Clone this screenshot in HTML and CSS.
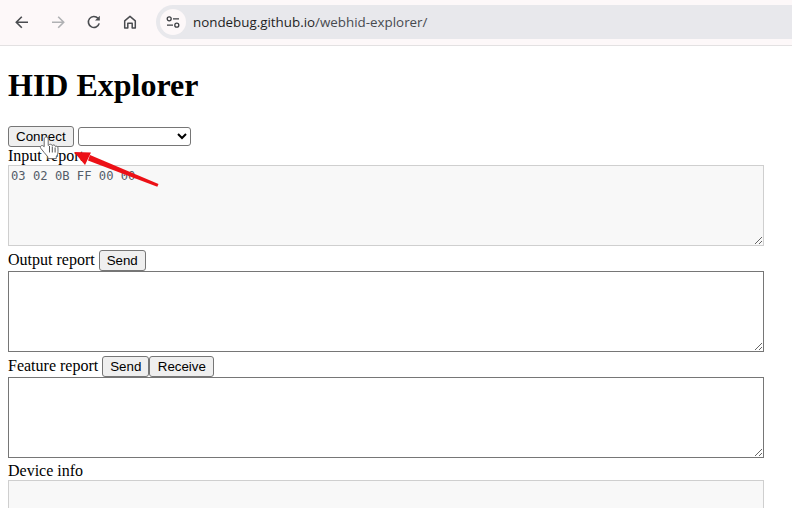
FILE: index.html
```html
<!DOCTYPE html>
<html lang="en">
<head>
<meta charset="utf-8">
<title>HID Explorer</title>
<link rel="stylesheet" href="styles.css">
</head>
<body>
<header class="toolbar">
  <button class="nav" aria-label="Back"><svg width="16" height="16" viewBox="0 0 16 16"><path d="M14 8.300H2.500M7.800 2.800 2.300 8.300l5.500 5.500" fill="none" stroke="#4a4c50" stroke-width="1.600"/></svg></button>
  <button class="nav" aria-label="Forward"><svg width="16" height="16" viewBox="0 0 16 16"><path d="M2 8.300H13.500M8.200 2.800 13.700 8.300l-5.500 5.500" fill="none" stroke="#b0b1b4" stroke-width="1.600"/></svg></button>
  <button class="nav" aria-label="Reload"><svg width="16" height="16" viewBox="0 0 16 16"><path d="M13.200 9.400A5.500 5.500 0 1 1 12 4.300" fill="none" stroke="#4a4c50" stroke-width="1.600"/><path d="M13.800 1.800V6.600H9Z" fill="#4a4c50"/></svg></button>
  <button class="nav" aria-label="Home"><svg width="16" height="16" viewBox="0 0 16 16"><path d="M2.700 14V6.800L8 2.400l5.300 4.400V14H10.200V9.200H5.800V14Z" fill="none" stroke="#4a4c50" stroke-width="1.500" stroke-linejoin="round"/></svg></button>
  <div class="omnibox">
    <span class="site-icon"><svg width="16" height="16" viewBox="0 0 16 16"><circle cx="4.200" cy="4.800" r="2" fill="none" stroke="#3c3e42" stroke-width="1.300"/><path d="M8 4.800h6M2 11.200h6" stroke="#3c3e42" stroke-width="1.300"/><circle cx="11.800" cy="11.200" r="2" fill="none" stroke="#3c3e42" stroke-width="1.300"/></svg></span>
    <span class="url">nondebug.github.io<span class="url-path">/webhid-explorer/</span></span>
  </div>
</header>
<main class="page">
  <h1>HID Explorer</h1>
  <div><button class="ctl">Connect</button> <select class="picker"><option></option></select></div>
  <div>Input report</div>
  <textarea class="report" disabled>03 02 0B FF 00 00</textarea>
  <div>Output report <button class="ctl">Send</button></div>
  <textarea class="report"></textarea>
  <div>Feature report <button class="ctl">Send</button><button class="ctl wide">Receive</button></div>
  <textarea class="report"></textarea>
  <div>Device info</div>
  <textarea class="report" disabled></textarea>
</main>
<svg class="overlay" width="792" height="508" viewBox="0 0 792 508">
  <path d="M158.500 184 157.300 186.800 88 160.500 90 155Z" fill="#ec1016"/>
  <path d="M74 152 91 152.500 85 165Z" fill="#ec1016"/>
  <path d="M44.200 139c0-2.600 4-2.600 4 0v6.500l.6-.3c1-1.500 3-1.100 3.300.3 1.200-1.100 3-.6 3.300.9 1.200-.7 2.600.1 2.600 1.600v3.800c0 2-.8 3.300-1.700 4.800v2H47.800v-1.800c-2.500-3-5-5.800-7-8.500-1.300-1.900.9-3.600 2.400-2.400l1 .8Z" fill="#fff" stroke="#6a6a6a" stroke-width="1"/>
  <path d="M49.500 146v6.500M52.300 146.500v6M55.100 147.500v5" stroke="#555" stroke-width="1"/>
</svg>
</body>
</html>
```
FILE: styles.css
```css
html, body {
  margin: 0;
  height: 508px;
  overflow: hidden;
  background: #fff;
}
body {
  font-family: "Liberation Serif", serif;
  font-size: 16px;
  color: #000;
  position: relative;
}
.toolbar {
  height: 45px;
  background: #fdf8f9;
  border-bottom: 1px solid #e3e1e2;
  display: flex;
  align-items: flex-start;
  padding-left: 4px;
}
.nav {
  width: 36px;
  height: 36px;
  margin-top: 4px;
  padding: 0;
  border: 0;
  background: none;
  display: flex;
  align-items: center;
  justify-content: center;
}
.omnibox {
  margin: 5px 0 0 8px;
  height: 34px;
  flex: 1;
  background: #e8e8ec;
  border-radius: 17px 0 0 17px;
  display: flex;
  align-items: center;
  padding-left: 4px;
}
.site-icon {
  width: 26px;
  height: 26px;
  border-radius: 50%;
  background: #fdf8f9;
  display: flex;
  align-items: center;
  justify-content: center;
}
.url {
  margin-left: 7px;
  font-family: "Open Sans", "Noto Sans", sans-serif;
  font-size: 13.370px;
  color: #1f1f1f;
}
.url-path {
  color: #474a4f;
}
.page {
  padding: 0 8px;
}
h1 {
  font-size: 32px;
  font-weight: bold;
  margin: 21.440px 0;
}
.ctl {
  font-family: "Liberation Sans", sans-serif;
  font-size: 13.333px;
  height: 21px;
  padding: 1px 7px;
  box-sizing: border-box;
  background: #efefef;
  border: 1px solid #767676;
  border-radius: 3px;
  color: #000;
}
.wide {
  width: 65px;
}
.picker {
  width: 113px;
  height: 19px;
  font-family: "Liberation Sans", sans-serif;
  font-size: 13.333px;
  background: #fff;
  border: 1px solid #767676;
  border-radius: 3px;
}
.report {
  display: block;
  width: 756px;
  height: 81px;
  box-sizing: border-box;
  padding: 3px 2px 2px;
  margin: 0 0 4px;
  border: 1px solid #767676;
  border-radius: 0;
  background: #fff;
  font-family: "DejaVu Sans Mono", monospace;
  font-size: 12.170px;
  line-height: 15px;
}
.report:disabled {
  background: #f8f8f8;
  border-color: #cfcfcf;
  color: #545c68;
}
.overlay {
  position: absolute;
  left: 0;
  top: 0;
  pointer-events: none;
}
```
